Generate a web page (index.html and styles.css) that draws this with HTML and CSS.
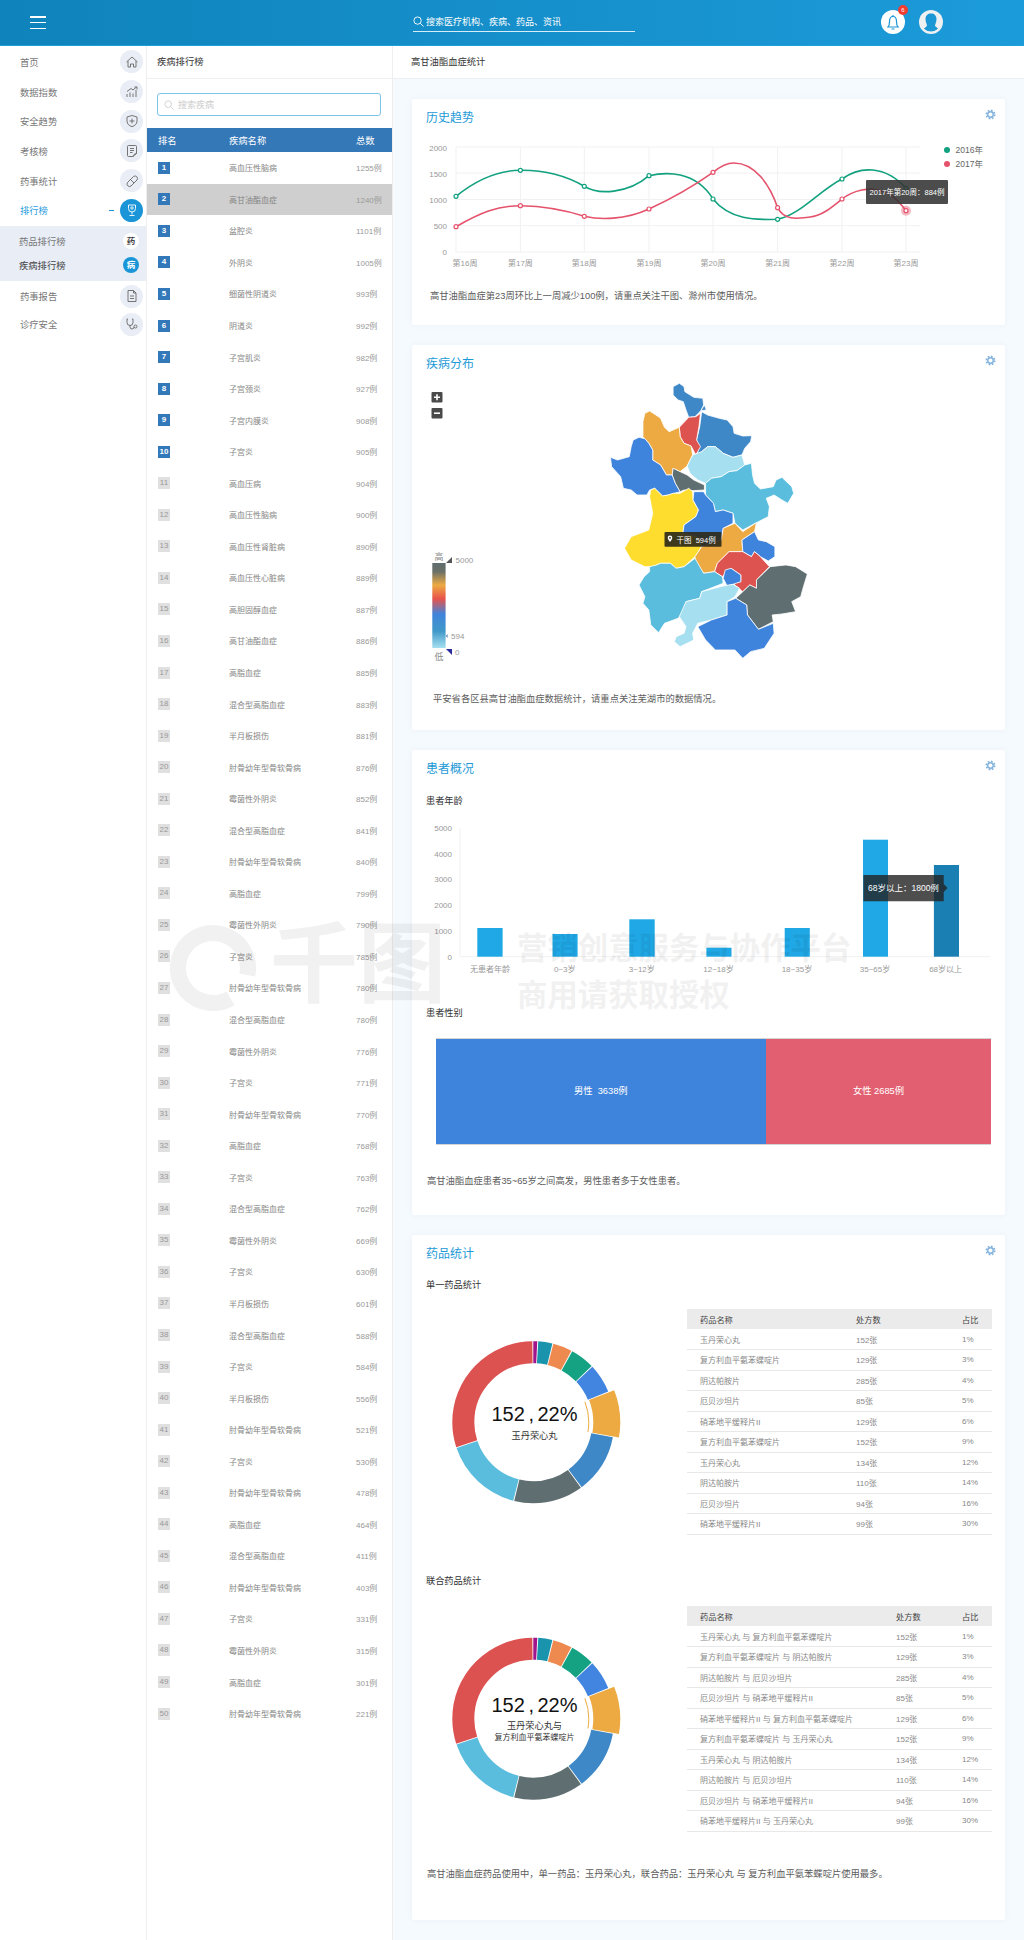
FILE: index.html
```html
<!DOCTYPE html>
<html lang="zh-CN">
<head>
    <meta charset="UTF-8">
    <meta name="viewport" content="width=device-width, initial-scale=1.0">
    <title>高甘油酯血症统计</title>
    <link rel="stylesheet" href="styles.css">
</head>
<body>
    <svg class="sprite" width="0" height="0">
        <symbol id="gear" viewBox="0 0 12 12">
            <circle cx="6" cy="6" r="3" fill="none" stroke="#7fb0dc" stroke-width="1.5"/>
            <circle cx="6" cy="6" r="4.6" fill="none" stroke="#7fb0dc" stroke-width="1.7" stroke-dasharray="1.9 1.7"/>
        </symbol>
        <g id="donut" fill="none">
            <circle r="70" stroke="#a0148c" stroke-width="22" pathLength="100" stroke-dasharray="0.8 99.2" transform="rotate(-90)"/>
            <circle r="70" stroke="#1a94ac" stroke-width="22" pathLength="100" stroke-dasharray="2.8 97.2" stroke-dashoffset="-1" transform="rotate(-90)"/>
            <circle r="70" stroke="#ee8a50" stroke-width="22" pathLength="100" stroke-dasharray="3.8 96.2" stroke-dashoffset="-4" transform="rotate(-90)"/>
            <circle r="70" stroke="#14a282" stroke-width="22" pathLength="100" stroke-dasharray="4.8 95.2" stroke-dashoffset="-8" transform="rotate(-90)"/>
            <circle r="70" stroke="#4285e0" stroke-width="22" pathLength="100" stroke-dasharray="5.8 94.2" stroke-dashoffset="-13" transform="rotate(-90)"/>
            <circle r="73.5" stroke="#edaa42" stroke-width="27" pathLength="100" stroke-dasharray="8.8 91.2" stroke-dashoffset="-19" transform="rotate(-90)"/>
            <circle r="55.5" stroke="#edaa42" stroke-width="1" pathLength="100" stroke-dasharray="8.8 91.2" stroke-dashoffset="-19" transform="rotate(-90)"/>
            <circle r="70" stroke="#3f88c8" stroke-width="22" pathLength="100" stroke-dasharray="11.8 88.2" stroke-dashoffset="-28" transform="rotate(-90)"/>
            <circle r="70" stroke="#5f6e70" stroke-width="22" pathLength="100" stroke-dasharray="13.8 86.2" stroke-dashoffset="-40" transform="rotate(-90)"/>
            <circle r="70" stroke="#5abddd" stroke-width="22" pathLength="100" stroke-dasharray="15.8 84.2" stroke-dashoffset="-54" transform="rotate(-90)"/>
            <circle r="70" stroke="#dc5251" stroke-width="22" pathLength="100" stroke-dasharray="29.8 70.2" stroke-dashoffset="-70" transform="rotate(-90)"/>
        </g>
    </svg>

    <header class="topbar">
        <div class="hamburger"><span></span><span></span><span></span></div>
        <div class="top-search">
            <svg width="11" height="11" viewBox="0 0 12 12" fill="none" stroke="#fff" stroke-width="1"><circle cx="5" cy="5" r="4"/><path d="M8 8l3.5 3.5"/></svg>
            <span>搜索医疗机构、疾病、药品、资讯</span>
        </div>
        <div class="top-icons">
            <div class="bell">
                <svg width="24" height="24" viewBox="0 0 24 24" fill="none" stroke="#1a96d8" stroke-width="1.2"><path d="M7 17c1.500-1.700 1.500-3.200 1.500-5.500 0-2.800 1.400-5 3.500-5s3.500 2.200 3.500 5c0 2.300 0 3.800 1.500 5.500z"/><path d="M10.500 19h3M12 5v1.500"/></svg>
                <span class="badge">6</span>
            </div>
            <svg class="avatar" width="24" height="24" viewBox="0 0 24 24"><circle cx="12" cy="12" r="12" fill="#eef0f2"/><path d="M6.500 9.500c0-3.500 2.300-5.500 5.500-5.500s5.500 2 5.500 5.500c0 3.500-1.500 5-1.500 7l3 2.500c-1.800 2-4 3-6.500 3h-1c-2.500 0-4.700-1-6.500-3l3-2.500c0-2-1.500-3.500-1.500-7z" fill="#1b97d6" transform="translate(0 -.5)"/><path d="M5 19.500c1.800 1.800 4.300 2.800 7 2.800s5.200-1 7-2.800" fill="none" stroke="#eef0f2" stroke-width=".8"/></svg>
        </div>
    </header>

    <div class="layout">
        <nav class="sidebar">
            <div class="nav-item"><span>首页</span>
                <i class="nav-icon"><svg viewBox="0 0 14 14"><path d="M1.500 7L7 2l5.500 5M3 6v6h2.500V9h3v3H11V6"/></svg></i></div>
            <div class="nav-item"><span>数据指数</span>
                <i class="nav-icon"><svg viewBox="0 0 14 14"><path d="M2 12V9M5 12V7.500M8 12V8.500M11 12V5M2 6.500L6 3.500l2 1.500 3.500-3M9.500 2h2.500v2.500"/></svg></i></div>
            <div class="nav-item"><span>安全趋势</span>
                <i class="nav-icon"><svg viewBox="0 0 14 14"><path d="M7 1.500l5 1.500v4c0 3-2.200 4.700-5 5.700C4.200 11.700 2 10 2 7V3zM7 4.500v5M4.500 7h5"/></svg></i></div>
            <div class="nav-item"><span>考核榜</span>
                <i class="nav-icon"><svg viewBox="0 0 14 14"><path d="M8 12.500H3.500a1 1 0 0 1-1-1v-9a1 1 0 0 1 1-1h7a1 1 0 0 1 1 1v7zM5 4.500h4M5 6.500h4M5 8.500h2.500M8 12.500c.5-1.500 1.500-3 3.500-3"/></svg></i></div>
            <div class="nav-item"><span>药事统计</span>
                <i class="nav-icon"><svg viewBox="0 0 14 14"><path d="M2.500 8.500l6-6a2.500 2.500 0 0 1 3.500 3.500l-6 6a2.500 2.500 0 0 1-3.500-3.500zM5.500 5.500L9 9"/></svg></i></div>
            <div class="nav-item nav-item-active"><span>排行榜</span><b class="nav-dash"></b>
                <i class="nav-icon"><svg viewBox="0 0 14 14"><path d="M3.500 2h7v3.500a3.500 3.500 0 0 1-7 0zM7 9v2.500M4.500 12.500h5"/><circle cx="7" cy="5" r="1.200"/></svg></i></div>
            <div class="submenu">
                <div class="sub-item"><span>药品排行榜</span><i class="sub-icon">药</i></div>
                <div class="sub-item sub-item-active"><span>疾病排行榜</span><i class="sub-icon">病</i></div>
            </div>
            <div class="nav-item nav-item-tight"><span>药事报告</span>
                <i class="nav-icon"><svg viewBox="0 0 14 14"><path d="M3 1.500h5.500L11 4v8.500H3zM8.500 1.500V4H11M5 7h4M5 9.500h4"/></svg></i></div>
            <div class="nav-item nav-item-tight"><span>诊疗安全</span>
                <i class="nav-icon"><svg viewBox="0 0 14 14"><path d="M3 2H2v3.500a3 3 0 0 0 6 0V2H7M5 8.500V10a2 2 0 0 0 4 0"/><circle cx="10.500" cy="9.500" r="1.500"/></svg></i></div>
        </nav>

        <section class="rank-panel">
            <div class="panel-title">疾病排行榜</div>
            <div class="rank-search">
                <svg width="10" height="10" viewBox="0 0 12 12" fill="none" stroke="#ccc" stroke-width="1"><circle cx="5" cy="5" r="4"/><path d="M8 8l3.500 3.500"/></svg>
                <span>搜索疾病</span>
            </div>
            <div class="rank-head"><span class="col-rank">排名</span><span class="col-name">疾病名称</span><span>总数</span></div>
            <div class="rank-row top"><span class="col-rank"><b>1</b></span><span class="col-name">高血压性脑病</span><span class="col-count">1255例</span></div>
            <div class="rank-row top current"><span class="col-rank"><b>2</b></span><span class="col-name">高甘油酯血症</span><span class="col-count">1240例</span></div>
            <div class="rank-row top"><span class="col-rank"><b>3</b></span><span class="col-name">盆腔炎</span><span class="col-count">1101例</span></div>
            <div class="rank-row top"><span class="col-rank"><b>4</b></span><span class="col-name">外阴炎</span><span class="col-count">1005例</span></div>
            <div class="rank-row top"><span class="col-rank"><b>5</b></span><span class="col-name">细菌性阴道炎</span><span class="col-count">993例</span></div>
            <div class="rank-row top"><span class="col-rank"><b>6</b></span><span class="col-name">阴道炎</span><span class="col-count">992例</span></div>
            <div class="rank-row top"><span class="col-rank"><b>7</b></span><span class="col-name">子宫肌炎</span><span class="col-count">982例</span></div>
            <div class="rank-row top"><span class="col-rank"><b>8</b></span><span class="col-name">子宫颈炎</span><span class="col-count">927例</span></div>
            <div class="rank-row top"><span class="col-rank"><b>9</b></span><span class="col-name">子宫内膜炎</span><span class="col-count">908例</span></div>
            <div class="rank-row top"><span class="col-rank"><b>10</b></span><span class="col-name">子宫炎</span><span class="col-count">905例</span></div>
            <div class="rank-row"><span class="col-rank"><b>11</b></span><span class="col-name">高血压病</span><span class="col-count">904例</span></div>
            <div class="rank-row"><span class="col-rank"><b>12</b></span><span class="col-name">高血压性脑病</span><span class="col-count">900例</span></div>
            <div class="rank-row"><span class="col-rank"><b>13</b></span><span class="col-name">高血压性肾脏病</span><span class="col-count">890例</span></div>
            <div class="rank-row"><span class="col-rank"><b>14</b></span><span class="col-name">高血压性心脏病</span><span class="col-count">889例</span></div>
            <div class="rank-row"><span class="col-rank"><b>15</b></span><span class="col-name">高胆固醇血症</span><span class="col-count">887例</span></div>
            <div class="rank-row"><span class="col-rank"><b>16</b></span><span class="col-name">高甘油酯血症</span><span class="col-count">886例</span></div>
            <div class="rank-row"><span class="col-rank"><b>17</b></span><span class="col-name">高脂血症</span><span class="col-count">885例</span></div>
            <div class="rank-row"><span class="col-rank"><b>18</b></span><span class="col-name">混合型高脂血症</span><span class="col-count">883例</span></div>
            <div class="rank-row"><span class="col-rank"><b>19</b></span><span class="col-name">半月板损伤</span><span class="col-count">881例</span></div>
            <div class="rank-row"><span class="col-rank"><b>20</b></span><span class="col-name">肘骨幼年型骨软骨病</span><span class="col-count">876例</span></div>
            <div class="rank-row"><span class="col-rank"><b>21</b></span><span class="col-name">霉菌性外阴炎</span><span class="col-count">852例</span></div>
            <div class="rank-row"><span class="col-rank"><b>22</b></span><span class="col-name">混合型高脂血症</span><span class="col-count">841例</span></div>
            <div class="rank-row"><span class="col-rank"><b>23</b></span><span class="col-name">肘骨幼年型骨软骨病</span><span class="col-count">840例</span></div>
            <div class="rank-row"><span class="col-rank"><b>24</b></span><span class="col-name">高脂血症</span><span class="col-count">799例</span></div>
            <div class="rank-row"><span class="col-rank"><b>25</b></span><span class="col-name">霉菌性外阴炎</span><span class="col-count">790例</span></div>
            <div class="rank-row"><span class="col-rank"><b>26</b></span><span class="col-name">子宫炎</span><span class="col-count">785例</span></div>
            <div class="rank-row"><span class="col-rank"><b>27</b></span><span class="col-name">肘骨幼年型骨软骨病</span><span class="col-count">780例</span></div>
            <div class="rank-row"><span class="col-rank"><b>28</b></span><span class="col-name">混合型高脂血症</span><span class="col-count">780例</span></div>
            <div class="rank-row"><span class="col-rank"><b>29</b></span><span class="col-name">霉菌性外阴炎</span><span class="col-count">776例</span></div>
            <div class="rank-row"><span class="col-rank"><b>30</b></span><span class="col-name">子宫炎</span><span class="col-count">771例</span></div>
            <div class="rank-row"><span class="col-rank"><b>31</b></span><span class="col-name">肘骨幼年型骨软骨病</span><span class="col-count">770例</span></div>
            <div class="rank-row"><span class="col-rank"><b>32</b></span><span class="col-name">高脂血症</span><span class="col-count">768例</span></div>
            <div class="rank-row"><span class="col-rank"><b>33</b></span><span class="col-name">子宫炎</span><span class="col-count">763例</span></div>
            <div class="rank-row"><span class="col-rank"><b>34</b></span><span class="col-name">混合型高脂血症</span><span class="col-count">762例</span></div>
            <div class="rank-row"><span class="col-rank"><b>35</b></span><span class="col-name">霉菌性外阴炎</span><span class="col-count">669例</span></div>
            <div class="rank-row"><span class="col-rank"><b>36</b></span><span class="col-name">子宫炎</span><span class="col-count">630例</span></div>
            <div class="rank-row"><span class="col-rank"><b>37</b></span><span class="col-name">半月板损伤</span><span class="col-count">601例</span></div>
            <div class="rank-row"><span class="col-rank"><b>38</b></span><span class="col-name">混合型高脂血症</span><span class="col-count">588例</span></div>
            <div class="rank-row"><span class="col-rank"><b>39</b></span><span class="col-name">子宫炎</span><span class="col-count">584例</span></div>
            <div class="rank-row"><span class="col-rank"><b>40</b></span><span class="col-name">半月板损伤</span><span class="col-count">556例</span></div>
            <div class="rank-row"><span class="col-rank"><b>41</b></span><span class="col-name">肘骨幼年型骨软骨病</span><span class="col-count">521例</span></div>
            <div class="rank-row"><span class="col-rank"><b>42</b></span><span class="col-name">子宫炎</span><span class="col-count">530例</span></div>
            <div class="rank-row"><span class="col-rank"><b>43</b></span><span class="col-name">肘骨幼年型骨软骨病</span><span class="col-count">478例</span></div>
            <div class="rank-row"><span class="col-rank"><b>44</b></span><span class="col-name">高脂血症</span><span class="col-count">464例</span></div>
            <div class="rank-row"><span class="col-rank"><b>45</b></span><span class="col-name">混合型高脂血症</span><span class="col-count">411例</span></div>
            <div class="rank-row"><span class="col-rank"><b>46</b></span><span class="col-name">肘骨幼年型骨软骨病</span><span class="col-count">403例</span></div>
            <div class="rank-row"><span class="col-rank"><b>47</b></span><span class="col-name">子宫炎</span><span class="col-count">331例</span></div>
            <div class="rank-row"><span class="col-rank"><b>48</b></span><span class="col-name">霉菌性外阴炎</span><span class="col-count">315例</span></div>
            <div class="rank-row"><span class="col-rank"><b>49</b></span><span class="col-name">高脂血症</span><span class="col-count">301例</span></div>
            <div class="rank-row"><span class="col-rank"><b>50</b></span><span class="col-name">肘骨幼年型骨软骨病</span><span class="col-count">221例</span></div>
        </section>

        <main class="main">
            <div class="main-title">高甘油酯血症统计</div>
            <div class="cards">

                <section class="card card-trend">
                    <div class="card-head"><h2>历史趋势</h2><svg class="gear"><use href="#gear"/></svg></div>
                    <svg class="chart" width="593" height="145" viewBox="412 137 593 145">
                        <g class="grid">
                            <path d="M456 147H920M456 173H920M456 199.500H920M456 225.700H920M456 252H920"/>
                            <path d="M456 147V252M520.400 147V252M584.300 147V252M649 147V252M713 147V252M777.600 147V252M842 147V252M906 147V252"/>
                        </g>
                        <g class="axis-text" text-anchor="end">
                            <text x="447" y="151">2000</text><text x="447" y="177">1500</text><text x="447" y="202.500">1000</text><text x="447" y="228.500">500</text><text x="447" y="255">0</text>
                        </g>
                        <g class="axis-text" text-anchor="middle">
                            <text x="465" y="266">第16周</text><text x="520.400" y="266">第17周</text><text x="584.300" y="266">第18周</text><text x="649" y="266">第19周</text><text x="713" y="266">第20周</text><text x="777.600" y="266">第21周</text><text x="842" y="266">第22周</text><text x="906" y="266">第23周</text>
                        </g>
                        <path class="line-green" d="M456 196.300C475 181 497 170.300 520.400 170.300C550 170 570 178 584.300 186.300C598 195 628 194 649 175.700C665 172 695 170 713 199C730 220 755 220 777.600 219.300C800 215 820 190 842 179C860 166 885 165 906 188.300"/>
                        <path class="line-red" d="M456 226.700C480 213 497 205.700 520.400 205.700C545 206 565 210 584.300 216.300C600 220 625 220 649 209C675 197 695 185 713 172.300C722 165 728 163 734 163C755 163 770 185 777.600 207.700C785 222 800 218 810 217C822 216 832 207 842 199C855 189 870 188 878 190C890 192 898 200 906 210.700"/>
                        <g class="dots-green">
                            <circle cx="456" cy="196.300" r="2"/><circle cx="520.400" cy="170.300" r="2"/><circle cx="584.300" cy="186.300" r="2"/><circle cx="649" cy="175.700" r="2"/><circle cx="713" cy="199" r="2"/><circle cx="777.600" cy="219.300" r="2"/><circle cx="842" cy="179" r="2"/><circle cx="906" cy="188.300" r="2"/>
                        </g>
                        <g class="dots-red">
                            <circle cx="456" cy="226.700" r="2"/><circle cx="520.400" cy="205.700" r="2"/><circle cx="584.300" cy="216.300" r="2"/><circle cx="649" cy="209" r="2"/><circle cx="713" cy="172.300" r="2"/><circle cx="777.600" cy="207.700" r="2"/><circle cx="842" cy="199" r="2"/>
                        </g>
                        <circle cx="906" cy="210.700" r="5" fill="#e5526c" opacity=".4"/>
                        <circle cx="906" cy="210.700" r="2" fill="#fff" stroke="#e5526c" stroke-width="1.200"/>
                        <rect class="tip-box" x="866" y="180" width="82" height="24" rx="1"/>
                        <text class="tip-text" x="907" y="194.500" text-anchor="middle">2017年第20周：884例</text>
                        <circle cx="947" cy="150" r="3" fill="#12a17f"/><text class="legend-text" x="955.500" y="153">2016年</text>
                        <circle cx="947" cy="164" r="3" fill="#e5526c"/><text class="legend-text" x="955.500" y="167">2017年</text>
                    </svg>
                    <p class="note note-trend">高甘油酯血症第23周环比上一周减少100例，请重点关注干图、滁州市使用情况。</p>
                </section>

                <section class="card card-map">
                    <div class="card-head"><h2>疾病分布</h2><svg class="gear"><use href="#gear"/></svg></div>
                    <svg class="chart" width="593" height="302" viewBox="412 383 593 302">
                        <defs>
                            <linearGradient id="scale" x1="0" y1="0" x2="0" y2="1">
                                <stop offset="0" stop-color="#5f6e70"/><stop offset=".1" stop-color="#6b7068"/><stop offset=".26" stop-color="#edaa42"/><stop offset=".42" stop-color="#e8534a"/><stop offset=".6" stop-color="#3f84dc"/><stop offset=".8" stop-color="#3f98c8"/><stop offset="1" stop-color="#a6e0f0"/>
                            </linearGradient>
                        </defs>
                        <g transform="translate(410 340) scale(.3915 .3333)" class="map">
                            <polygon fill="#3f88c8" points="672,140 688,130 700,140 702,155 725,172 748,175 750,195 743,212 728,230 712,232 705,210 698,185 685,180 672,165"/>
                            <polygon fill="#3f88c8" points="743,212 752,195 757,210"/>
                            <polygon fill="#3f88c8" points="745,215 760,225 790,235 810,240 825,260 828,280 850,288 873,287 870,305 855,325 848,345 825,352 800,340 780,320 760,320 745,335 733,345 738,320 732,300 740,260"/>
                            <polygon fill="#dd5350" points="712,232 730,230 742,220 738,260 732,300 742,320 730,345 718,318 700,310 690,290 688,262"/>
                            <polygon fill="#edaa42" points="600,220 612,213 628,225 640,235 650,262 662,275 682,265 688,262 690,290 700,310 718,318 722,345 708,378 690,395 672,385 670,405 655,405 640,375 620,360 620,330 610,310 595,290 595,245"/>
                            <polygon fill="#3f84dc" points="570,300 585,292 600,296 610,310 620,330 620,360 640,375 655,405 670,405 678,430 690,455 660,465 645,468 625,445 612,450 605,465 580,465 565,450 545,445 538,410 515,380 512,352 530,360 560,350 565,320"/>
                            <polygon fill="#a6e0f0" points="722,345 745,335 760,320 780,320 800,340 825,352 848,345 855,375 835,392 815,395 795,410 770,415 755,430 735,420 715,400 708,378"/>
                            <polygon fill="#5f6e70" points="672,385 690,395 708,405 725,420 752,435 752,450 725,452 700,450 690,455 678,430 670,405"/>
                            <polygon fill="#5abddd" points="755,430 770,415 795,410 815,395 835,392 855,375 872,370 875,405 880,430 895,447 928,440 935,420 950,412 975,440 980,460 965,490 950,480 930,465 910,475 918,500 915,530 890,545 850,570 830,550 825,520 800,510 780,515 775,490 755,465"/>
                            <polygon fill="#ffdd2e" points="615,450 625,445 645,468 660,465 672,460 690,460 712,445 722,455 723,480 737,510 730,530 700,555 697,580 735,590 745,620 728,650 700,680 680,685 665,670 640,670 620,680 600,680 565,660 548,625 565,590 610,570 620,520 612,470"/>
                            <polygon fill="#3f84dc" points="725,455 750,455 755,465 775,490 780,515 800,510 825,520 825,550 800,565 795,600 750,620 745,620 735,590 697,580 700,555 730,530 737,510 723,480"/>
                            <polygon fill="#edaa42" points="830,550 850,575 885,548 880,575 848,600 850,635 815,635 785,670 778,695 750,700 730,670 728,650 745,620 795,600 800,565"/>
                            <polygon fill="#3f84dc" points="848,600 880,575 890,600 910,605 932,620 932,650 915,663 895,650 880,635 872,650 850,635"/>
                            <polygon fill="#dd5350" points="785,670 815,635 850,635 872,650 880,635 895,650 918,680 885,720 885,745 868,735 850,755 825,730 845,725 845,705 820,685 805,700 798,710 778,695"/>
                            <polygon fill="#3f84dc" points="805,690 820,685 845,705 845,725 825,733 810,738 800,715"/>
                            <polygon fill="#5f6e70" points="920,680 960,675 985,680 1015,702 1005,740 998,770 975,785 985,815 950,822 925,825 928,845 890,868 862,825 860,795 832,775 850,755 868,735 885,745 885,720"/>
                            <polygon fill="#5abddd" points="612,680 630,675 640,670 665,670 680,685 700,680 728,655 750,700 778,695 798,710 800,730 745,755 740,775 705,785 700,810 685,835 650,850 635,878 615,855 610,810 595,790 600,770 585,735 598,710 612,695"/>
                            <polygon fill="#a6e0f0" points="800,738 825,733 842,745 830,770 810,785 810,825 770,840 735,850 722,880 725,900 690,920 675,905 680,890 700,880 705,860 688,830 705,785 740,775 745,755"/>
                            <polygon fill="#3f84dc" points="832,775 860,795 862,825 890,868 928,850 930,880 905,925 870,935 850,955 830,930 780,930 755,900 735,860 770,840 810,825 810,785"/>
                        </g>
                        <rect class="zoom-btn" x="431.500" y="392" width="11" height="10.500" rx="1"/>
                        <path class="zoom-mark" d="M434 397.200H440M437 394.200V400.200"/>
                        <rect class="zoom-btn" x="431.500" y="408" width="11" height="10.500" rx="1"/>
                        <path class="zoom-mark" d="M434 413.200H440"/>
                        <rect x="432.300" y="563" width="13.300" height="85" fill="url(#scale)"/>
                        <text class="scale-word" x="439" y="560" text-anchor="middle">高</text>
                        <text class="scale-word" x="439" y="660" text-anchor="middle">低</text>
                        <polygon points="446,563 452,563 452,557" fill="#555"/>
                        <polygon points="447.500,634 447.500,638 446,636" fill="#3f6fa8"/>
                        <polygon points="446,649 452,649 452,655" fill="#2a2a9a"/>
                        <text class="axis-text" x="455.500" y="563">5000</text>
                        <text class="axis-text" x="451" y="639">594</text>
                        <text class="axis-text" x="455" y="655">0</text>
                        <rect x="664.500" y="532" width="57" height="14.700" rx="1" fill="#2e2a1a" opacity=".92"/>
                        <path d="M670 535.500a2.300 2.300 0 0 1 2.300 2.300c0 1.500-2.300 4.200-2.300 4.200s-2.300-2.700-2.300-4.200a2.300 2.300 0 0 1 2.300-2.300z" fill="#fff"/>
                        <circle cx="670" cy="537.800" r=".9" fill="#2e2a1a"/>
                        <text class="tip-text" x="676.500" y="542.500">干图  594例</text>
                    </svg>
                    <p class="note note-map">平安省各区县高甘油酯血症数据统计，请重点关注芜湖市的数据情况。</p>
                </section>

                <section class="card card-patient">
                    <div class="card-head"><h2>患者概况</h2><svg class="gear"><use href="#gear"/></svg></div>
                    <h3 class="sub-title">患者年龄</h3>
                    <svg class="chart" width="593" height="186" viewBox="412 814 593 186">
                        <path class="grid" d="M460 828V956.700H990"/>
                        <g class="axis-text" text-anchor="end">
                            <text x="452" y="830.500">5000</text><text x="452" y="856.500">4000</text><text x="452" y="882">3000</text><text x="452" y="908">2000</text><text x="452" y="934">1000</text><text x="452" y="960">0</text>
                        </g>
                        <g fill="#1fa8e5">
                            <rect x="477.300" y="928" width="25.300" height="28.700"/>
                            <rect x="552.500" y="934" width="25.100" height="22.700"/>
                            <rect x="629.300" y="919.300" width="25.400" height="37.400"/>
                            <rect x="706.400" y="947.700" width="25.100" height="9"/>
                            <rect x="784.700" y="928" width="25.100" height="28.700"/>
                            <rect x="863" y="839.700" width="25" height="117"/>
                        </g>
                        <rect x="933.900" y="865" width="25.100" height="91.700" fill="#1a80b3"/>
                        <g class="axis-text" text-anchor="middle">
                            <text x="490" y="972">无患者年龄</text><text x="564.700" y="972">0~3岁</text><text x="641.800" y="972">3~12岁</text><text x="718.500" y="972">12~18岁</text><text x="796.900" y="972">18~35岁</text><text x="875" y="972">35~65岁</text><text x="945.600" y="972">68岁以上</text>
                        </g>
                        <path d="M863.400 875H943.700V884L947.600 888L943.700 892V901.300H863.400z" fill="#222" opacity=".8"/>
                        <text class="tip-text tip-large" x="868" y="891">68岁以上：1800例</text>
                    </svg>
                    <h3 class="sub-title">患者性别</h3>
                    <div class="gender-bar">
                        <div class="gender-male">男性&nbsp;&nbsp;3638例</div>
                        <div class="gender-female">女性 2685例</div>
                    </div>
                    <p class="note note-patient">高甘油酯血症患者35~65岁之间高发，男性患者多于女性患者。</p>
                </section>

                <section class="card card-drug">
                    <div class="card-head"><h2>药品统计</h2><svg class="gear"><use href="#gear"/></svg></div>
                    <h3 class="sub-title sub-title-tight">单一药品统计</h3>
                    <div class="drug-block">
                        <svg class="donut" width="275" height="226" viewBox="412 1309 275 226">
                            <use href="#donut" x="533.300" y="1422.200"/>
                            <text class="donut-num" x="534.500" y="1421" text-anchor="middle">152 , 22%</text>
                            <text class="donut-label" x="534.500" y="1438.500" text-anchor="middle">玉丹荣心丸</text>
                        </svg>
                        <table class="drug-table">
                            <thead><tr><th>药品名称</th><th>处方数</th><th>占比</th></tr></thead>
                            <tbody>
                                <tr><td>玉丹荣心丸</td><td>152张</td><td>1%</td></tr>
                                <tr><td>复方利血平氨苯蝶啶片</td><td>129张</td><td>3%</td></tr>
                                <tr><td>阴达帕胺片</td><td>285张</td><td>4%</td></tr>
                                <tr><td>厄贝沙坦片</td><td>85张</td><td>5%</td></tr>
                                <tr><td>硝苯地平缓释片II</td><td>129张</td><td>6%</td></tr>
                                <tr><td>复方利血平氨苯蝶啶片</td><td>152张</td><td>9%</td></tr>
                                <tr><td>玉丹荣心丸</td><td>134张</td><td>12%</td></tr>
                                <tr><td>阴达帕胺片</td><td>110张</td><td>14%</td></tr>
                                <tr><td>厄贝沙坦片</td><td>94张</td><td>16%</td></tr>
                                <tr><td>硝苯地平缓释片II</td><td>99张</td><td>30%</td></tr>
                            </tbody>
                        </table>
                    </div>
                    <h3 class="sub-title sub-title-pair">联合药品统计</h3>
                    <div class="drug-block">
                        <svg class="donut" width="275" height="226" viewBox="412 1606 275 226">
                            <use href="#donut" x="533.300" y="1718.700"/>
                            <text class="donut-num" x="534.500" y="1712" text-anchor="middle">152 , 22%</text>
                            <text class="donut-label" x="534.500" y="1728.500" text-anchor="middle">玉丹荣心丸与</text>
                            <text class="donut-label donut-label-small" x="534.500" y="1739.500" text-anchor="middle">复方利血平氨苯蝶啶片</text>
                        </svg>
                        <table class="drug-table drug-table-pair">
                            <thead><tr><th>药品名称</th><th>处方数</th><th>占比</th></tr></thead>
                            <tbody>
                                <tr><td>玉丹荣心丸 与 复方利血平氨苯蝶啶片</td><td>152张</td><td>1%</td></tr>
                                <tr><td>复方利血平氨苯蝶啶片 与 阴达帕胺片</td><td>129张</td><td>3%</td></tr>
                                <tr><td>阴达帕胺片 与 厄贝沙坦片</td><td>285张</td><td>4%</td></tr>
                                <tr><td>厄贝沙坦片 与 硝苯地平缓释片II</td><td>85张</td><td>5%</td></tr>
                                <tr><td>硝苯地平缓释片II 与 复方利血平氨苯蝶啶片</td><td>129张</td><td>6%</td></tr>
                                <tr><td>复方利血平氨苯蝶啶片 与 玉丹荣心丸</td><td>152张</td><td>9%</td></tr>
                                <tr><td>玉丹荣心丸 与 阴达帕胺片</td><td>134张</td><td>12%</td></tr>
                                <tr><td>阴达帕胺片 与 厄贝沙坦片</td><td>110张</td><td>14%</td></tr>
                                <tr><td>厄贝沙坦片 与 硝苯地平缓释片II</td><td>94张</td><td>16%</td></tr>
                                <tr><td>硝苯地平缓释片II 与 玉丹荣心丸</td><td>99张</td><td>30%</td></tr>
                            </tbody>
                        </table>
                    </div>
                    <p class="note note-drug">高甘油酯血症药品使用中，单一药品：玉丹荣心丸，联合药品：玉丹荣心丸 与 复方利血平氨苯蝶啶片使用最多。</p>
                </section>

            </div>
        </main>
    </div>

    <div class="watermark">
        <svg class="wm-ring" width="90" height="90" viewBox="0 0 90 90"><circle cx="45" cy="45" r="35" fill="none" stroke="#000" stroke-width="16" stroke-dasharray="190 30" transform="rotate(60 45 45)"/></svg>
        <span class="wm-logo">千图</span>
        <span class="wm-line wm-line-one">营销创意服务与协作平台</span>
        <span class="wm-line wm-line-two">商用请获取授权</span>
    </div>
</body>
</html>
```

FILE: styles.css
```css
* {
    box-sizing: border-box;
}
html, body {
    margin: 0;
    padding: 0;
}
body {
    position: relative;
    width: 1024px;
    height: 1940px;
    overflow: hidden;
    font-family: "Liberation Sans", "Noto Sans CJK SC", sans-serif;
    font-size: 9.3px;
    color: #777;
    background: #fff;
}
.sprite {
    position: absolute;
}

/* top bar */
.topbar {
    display: flex;
    height: 46px;
    background: linear-gradient(90deg, #0f83bb, #1c9bda);
    border-bottom: 1px solid #1d9fdc;
}
.hamburger {
    display: flex;
    flex-direction: column;
    justify-content: space-between;
    width: 16px;
    height: 13px;
    margin: 16px 0 0 30px;
}
.hamburger span {
    height: 1.5px;
    background: #fff;
}
.top-search {
    display: flex;
    align-items: center;
    gap: 2px;
    width: 222px;
    height: 20px;
    margin: 12px 0 0 367px;
    color: #fff;
    font-size: 9px;
    border-bottom: 1px solid #d5eef9;
}
.top-icons {
    display: flex;
    gap: 14px;
    margin: 10px 0 0 246px;
}
.bell {
    position: relative;
    width: 24px;
    height: 24px;
    background: #fff;
    border-radius: 50%;
}
.bell svg {
    display: block;
}
.badge {
    position: absolute;
    top: -5px;
    right: -3px;
    width: 10px;
    height: 10px;
    border-radius: 50%;
    background: #f23c30;
    color: #fff;
    font-size: 6px;
    line-height: 10px;
    text-align: center;
}

/* page columns */
.layout {
    display: flex;
    height: 1894px;
}
.sidebar {
    width: 147px;
    padding-top: 1px;
    border-right: 1px solid #eee;
}
.nav-item {
    display: flex;
    align-items: center;
    height: 29.7px;
    padding: 0 3px 0 20px;
}
.nav-item-tight {
    height: 28px;
}
.nav-item span {
    flex: 1;
}
.nav-icon {
    display: flex;
    align-items: center;
    justify-content: center;
    width: 23px;
    height: 23px;
    border-radius: 50%;
    background: #e9edf5;
}
.nav-icon svg {
    width: 14px;
    height: 14px;
    fill: none;
    stroke: #666;
    stroke-width: .9;
}
.nav-item-active span {
    color: #2a9ee0;
}
.nav-item-active .nav-icon {
    background: #1a96d8;
}
.nav-item-active .nav-icon svg {
    stroke: #fff;
}
.nav-dash {
    width: 5px;
    height: 1.5px;
    margin-right: 6px;
    background: #1a96d8;
}
.submenu {
    margin: .4px 0 1.4px;
    padding: 4px 7px 4.2px 19px;
    background: #e8edf6;
}
.sub-item {
    display: flex;
    align-items: center;
    justify-content: space-between;
    height: 23.6px;
}
.sub-icon {
    width: 16px;
    height: 16px;
    border-radius: 50%;
    background: #fff;
    color: #444;
    font-size: 8.5px;
    font-style: normal;
    font-weight: bold;
    line-height: 16px;
    text-align: center;
}
.sub-item-active {
    color: #444;
}
.sub-item-active .sub-icon {
    background: #1a96d8;
    color: #fff;
}

/* ranking list */
.rank-panel {
    width: 246px;
    border-right: 1px solid #eee;
}
.panel-title {
    height: 33px;
    padding-left: 10px;
    color: #333;
    line-height: 32px;
    border-bottom: 1px solid #eee;
}
.rank-search {
    display: flex;
    align-items: center;
    gap: 4px;
    width: 224px;
    height: 23px;
    margin: 14px 0 12px 10px;
    padding-left: 6px;
    color: #ccc;
    font-size: 9px;
    border: 1px solid #7cc4ec;
    border-radius: 3px;
}
.rank-head {
    display: flex;
    align-items: center;
    height: 24px;
    padding-left: 11px;
    color: #fff;
    background: #3478b8;
}
.col-rank {
    width: 71px;
}
.col-name {
    width: 127px;
}
.rank-row {
    display: flex;
    align-items: center;
    height: 31.56px;
    padding-left: 11px;
    font-size: 8px;
    color: #858585;
}
.rank-row b {
    display: block;
    width: 12px;
    height: 12px;
    background: #e0e0e0;
    color: #999;
    font-weight: normal;
    line-height: 12px;
    text-align: center;
}
.rank-row.top b {
    background: #3378b9;
    color: #fff;
    font-weight: bold;
}
.rank-row.current {
    background: #cfcfcf;
}
.col-count {
    color: #999;
}

/* main column */
.main {
    flex: 1;
    background: #f5fafe;
}
.main-title {
    height: 33px;
    padding-left: 18px;
    color: #333;
    line-height: 32px;
    background: #fff;
    border-bottom: 1px solid #eee;
}
.cards {
    display: flex;
    flex-direction: column;
    gap: 20px;
    padding: 20px 19px;
}
.card {
    background: #fff;
    border-radius: 2px;
    box-shadow: 0 0 6px rgba(0, 70, 130, 0.05);
}
.card-trend {
    height: 226px;
}
.card-map {
    height: 385px;
}
.card-patient {
    height: 465px;
}
.card-drug {
    height: 685px;
}
.card-head {
    display: flex;
    justify-content: space-between;
    height: 38px;
    padding: 0 9px 0 14px;
}
.card-head h2 {
    margin: 0;
    color: #1e9ad6;
    font-size: 12px;
    font-weight: normal;
    line-height: 39px;
}
.gear {
    width: 11px;
    height: 11px;
    margin-top: 10px;
}
.chart {
    display: block;
}
.sub-title {
    height: 26px;
    margin: 0;
    padding-left: 14px;
    color: #333;
    font-size: 9.2px;
    font-weight: normal;
    line-height: 26px;
}
.sub-title-tight {
    margin-top: -1px;
}
.sub-title-pair {
    margin-top: 33px;
}
.note {
    height: 28px;
    margin: 0;
    color: #5c5c5c;
    line-height: 28px;
}
.note-trend {
    padding-left: 18px;
}
.note-map {
    padding-left: 21px;
}
.note-patient {
    margin-top: 22px;
    padding-left: 15px;
}
.note-drug {
    margin-top: 28px;
    padding-left: 15px;
}

/* svg parts */
.grid {
    fill: none;
    stroke: #f1f1f1;
    stroke-width: 1;
}
.axis-text {
    font-size: 8px;
    fill: #999;
}
.legend-text {
    font-size: 8.5px;
    fill: #666;
}
.line-green, .line-red {
    fill: none;
    stroke-width: 1.6;
}
.line-green {
    stroke: #12a17f;
}
.line-red {
    stroke: #e5526c;
}
.dots-green circle, .dots-red circle {
    fill: #fff;
    stroke-width: 1.2;
}
.dots-green circle {
    stroke: #12a17f;
}
.dots-red circle {
    stroke: #e5526c;
}
.tip-box {
    fill: #333;
    opacity: .88;
}
.tip-text {
    font-size: 7.5px;
    fill: #fff;
    white-space: pre;
}
.tip-large {
    font-size: 8.5px;
}
.map polygon {
    stroke: #fff;
    stroke-width: .8;
    stroke-linejoin: round;
    vector-effect: non-scaling-stroke;
}
.zoom-btn {
    fill: #4a4a4a;
}
.zoom-mark {
    fill: none;
    stroke: #fff;
    stroke-width: 1.6;
}
.scale-word {
    font-size: 9px;
    fill: #888;
}

/* gender split */
.gender-bar {
    display: flex;
    height: 107px;
    margin: 12px 14px 0 23.5px;
    color: #fff;
    line-height: 105px;
    text-align: center;
    border-top: 1px solid #d4d4d4;
    border-bottom: 1px solid #d4d4d4;
}
.gender-male {
    width: 330.5px;
    background: #3f84dc;
}
.gender-female {
    flex: 1;
    background: #e25f72;
}

/* drug tables */
.drug-block {
    display: flex;
    padding-top: 11px;
}
.sub-title-pair + .drug-block {
    padding-top: 12px;
}
.donut {
    flex: none;
    display: block;
}
.donut-num {
    font-size: 20px;
    word-spacing: -2px;
    fill: #111;
}
.donut-label {
    font-size: 9.2px;
    fill: #333;
}
.donut-label-small {
    font-size: 8px;
}
.drug-table {
    width: 305px;
    height: 225px;
    table-layout: fixed;
    border-collapse: collapse;
    font-size: 8px;
    color: #888;
}
.drug-table th {
    height: 20px;
    padding: 0;
    background: #ebebeb;
    color: #444;
    font-size: 8.2px;
    font-weight: normal;
    text-align: left;
}
.drug-table td {
    height: 20.5px;
    padding: 0;
    border-bottom: 1px solid #e8e8e8;
}
.drug-table th:first-child, .drug-table td:first-child {
    width: 169px;
    padding-left: 13px;
}
.drug-table th:last-child {
    width: 30px;
}
.drug-table-pair th:first-child, .drug-table-pair td:first-child {
    width: 209px;
}

/* faint stock-site mark across the page */
.watermark {
    position: absolute;
    inset: 0;
    pointer-events: none;
    color: #000;
    opacity: .05;
}
.watermark span {
    position: absolute;
    white-space: nowrap;
}
.wm-ring {
    position: absolute;
    left: 168px;
    top: 923px;
}
.wm-logo {
    left: 270px;
    top: 915px;
    font-size: 88px;
    font-weight: bold;
    line-height: 100px;
}
.wm-line {
    left: 517px;
    font-size: 30.4px;
    font-weight: bold;
    line-height: 40px;
}
.wm-line-one {
    top: 928px;
}
.wm-line-two {
    top: 975px;
}
```
